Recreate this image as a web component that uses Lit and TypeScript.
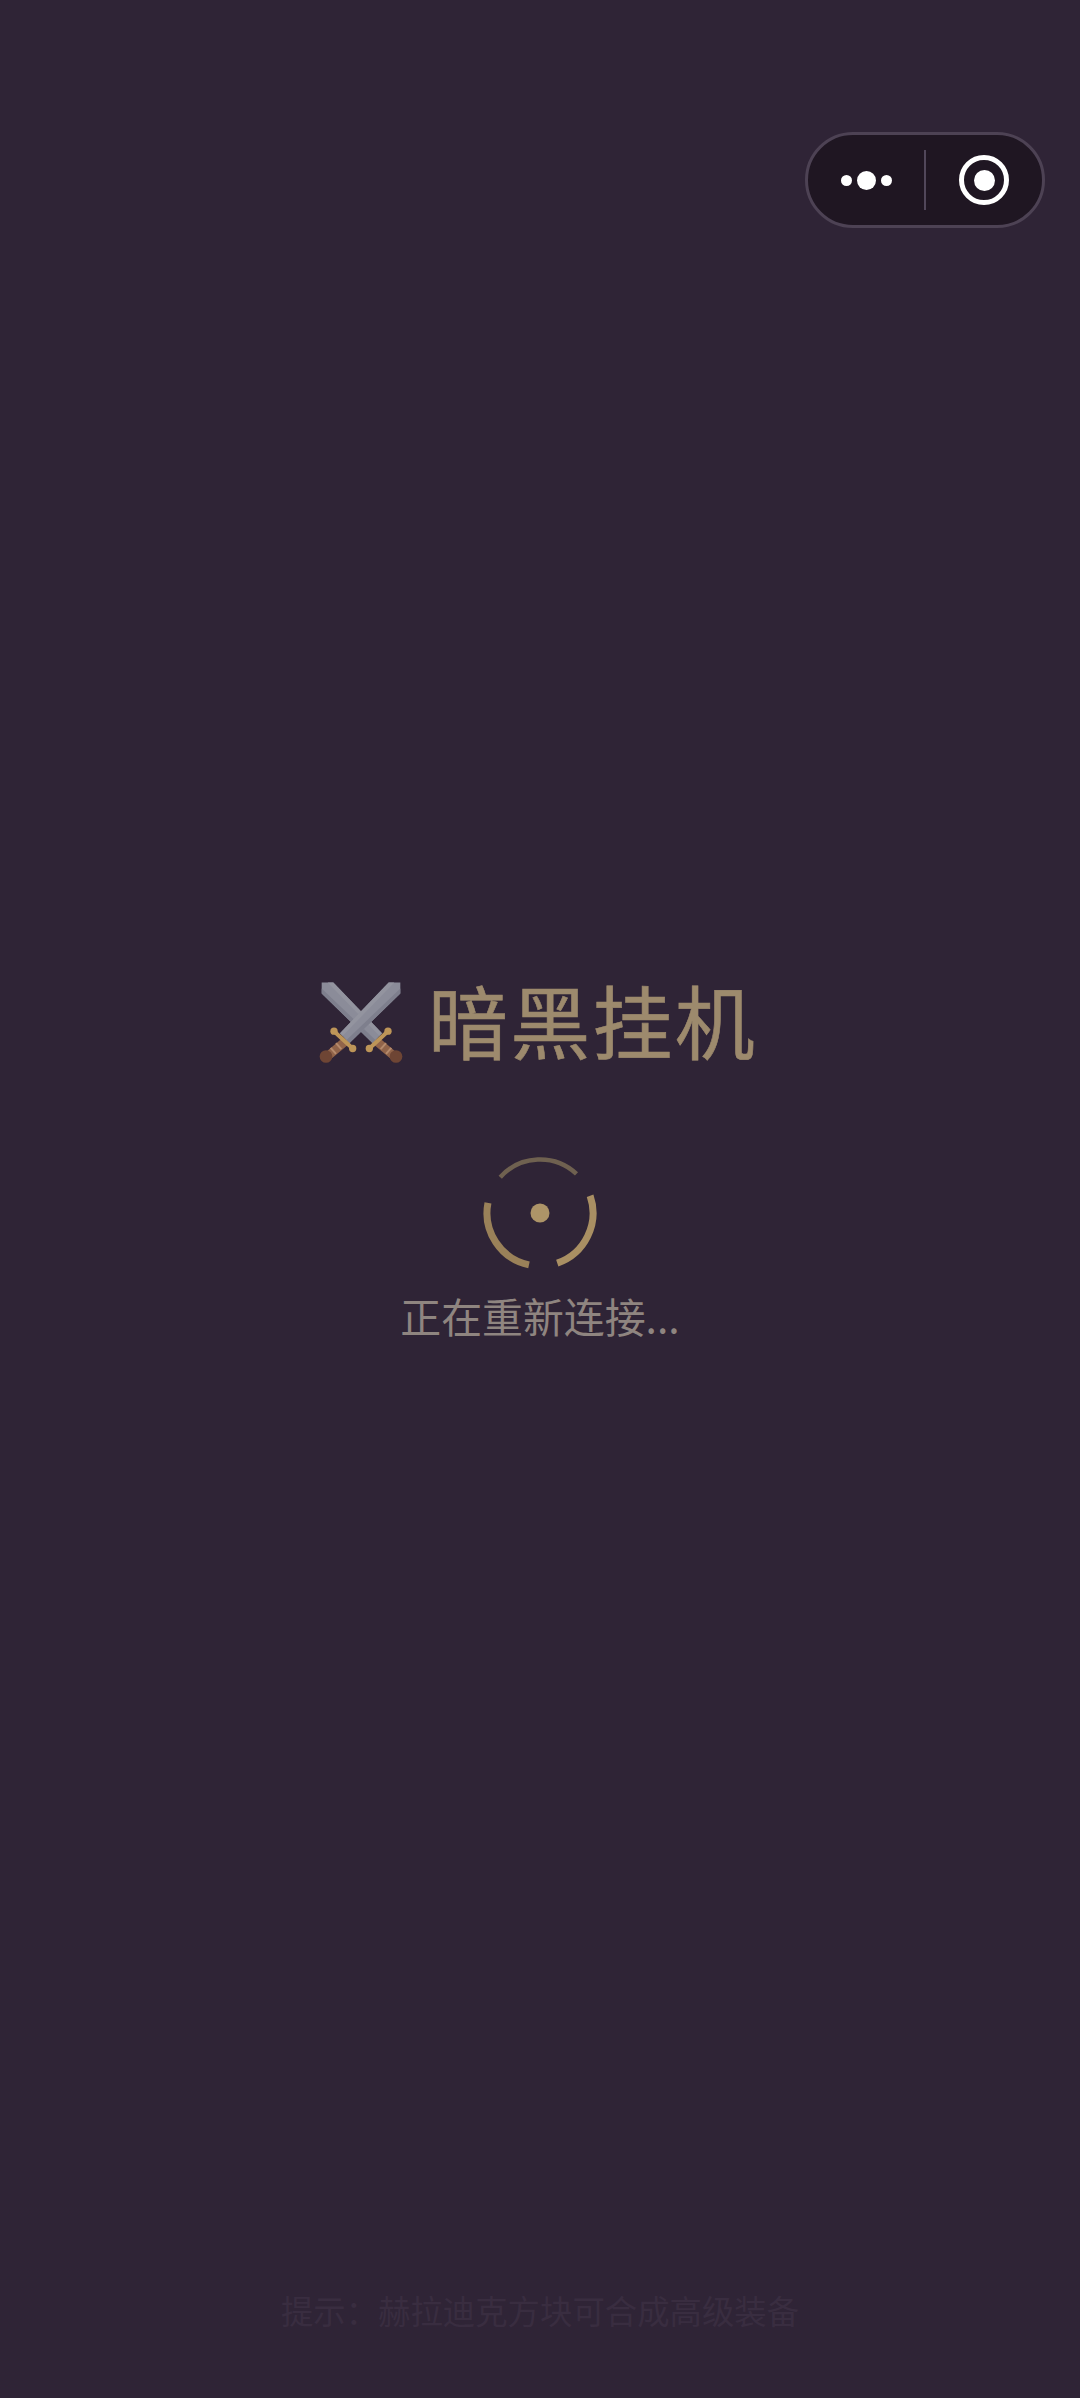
import { LitElement, html, css, svg } from 'lit';
import { customElement, property } from 'lit/decorators.js';

// polar helper for the spinner arcs, angles in degrees clockwise from 12 o'clock
const arc = (r: number, from: number, to: number) => {
  const pt = (a: number) => {
    const t = (a * Math.PI) / 180;
    return `${(60 + r * Math.sin(t)).toFixed(2)} ${(60 - r * Math.cos(t)).toFixed(2)}`;
  };
  return `M${pt(from)}A${r} ${r} 0 ${to - from > 180 ? 1 : 0} 1 ${pt(to)}`;
};

@customElement('menu-capsule')
export class MenuCapsule extends LitElement {
  static styles = css`
    :host {
      position: absolute;
      top: 132px;
      left: 805px;
      width: 240px;
      height: 96px;
      box-sizing: border-box;
      display: flex;
      align-items: center;
      background: #1f1622;
      border: 3px solid #4d4254;
      border-radius: 48px;
    }
    .more,
    .target {
      flex: 1;
      display: flex;
      justify-content: center;
      align-items: center;
    }
    .more {
      gap: 5px;
    }
    .dot {
      width: 11px;
      height: 11px;
      border-radius: 50%;
      background: #fff;
    }
    .dot.big {
      width: 19px;
      height: 19px;
    }
    .line {
      width: 2px;
      height: 60px;
      background: #51475a;
    }
    .ring {
      width: 50px;
      height: 50px;
      box-sizing: border-box;
      border: 5px solid #fff;
      border-radius: 50%;
      display: flex;
      justify-content: center;
      align-items: center;
    }
    .ring i {
      width: 21px;
      height: 21px;
      border-radius: 50%;
      background: #fff;
    }
  `;

  render() {
    return html`
      <div class="more">
        <span class="dot"></span><span class="dot big"></span><span class="dot"></span>
      </div>
      <div class="line"></div>
      <div class="target"><div class="ring"><i></i></div></div>
    `;
  }
}

@customElement('load-spinner')
export class LoadSpinner extends LitElement {
  static styles = css`
    :host {
      display: block;
      width: 120px;
      height: 120px;
    }
    svg {
      display: block;
    }
  `;

  render() {
    return html`
      <svg width="120" height="120" viewBox="0 0 120 120" fill="none">
        <path d=${arc(53.5, -48, 43)} stroke="#6f6150" stroke-width="4.5" />
        <path d=${arc(53, 71, 161)} stroke="#a98f63" stroke-width="7" />
        <path d=${arc(53, 192, 281)} stroke="#9a8159" stroke-width="7" />
        <circle cx="60" cy="60" r="9.5" fill="#ad9468" />
      </svg>
    `;
  }
}

@customElement('crossed-swords')
export class CrossedSwords extends LitElement {
  static styles = css`
    :host {
      display: block;
      width: 90px;
      height: 87px;
    }
    svg {
      display: block;
    }
  `;

  // one sword, tip at top right, handle at bottom left
  private sword() {
    return svg`
      <path d="M136 248L84 292" stroke="#91644a" stroke-width="26" />
      <path d="M110 252L126 270M94 266L110 284" stroke="#b58a6c" stroke-width="6" />
      <circle cx="80" cy="292" r="19" fill="#6e4534" />
      <path d="M268 70H303V103L150 252L122 222Z" fill="#8b8c99" />
      <path d="M268 70H285L130 230L122 222Z" fill="#93949f" />
      <path d="M303 88V103L150 252L141 243Z" fill="#7e7f8d" />
      <path d="M104 216L160 268" stroke="#bd9558" stroke-width="12" stroke-linecap="round" />
      <circle cx="104" cy="216" r="11" fill="#bd9558" />
      <circle cx="160" cy="268" r="11" fill="#bd9558" />
    `;
  }

  render() {
    return html`
      <svg width="90" height="87" viewBox="50 60 270 260">
        <g transform="matrix(-1 0 0 1 370 0)">${this.sword()}</g>
        ${this.sword()}
      </svg>
    `;
  }
}

@customElement('app-root')
export class AppRoot extends LitElement {
  @property() title = '暗黑挂机';
  @property() status = '正在重新连接...';
  @property() hint = '提示：赫拉迪克方块可合成高级装备';

  static styles = css`
    :host {
      display: flex;
      flex-direction: column;
      align-items: center;
      position: relative;
      height: 2398px;
      overflow: hidden;
      background: #2f2436;
      font-family: 'Noto Sans CJK SC', 'Noto Sans', sans-serif;
    }
    .brand {
      display: flex;
      align-items: center;
      gap: 22px;
      margin-top: 972px;
      height: 100px;
      padding-right: 7px;
    }
    .name {
      font-size: 80px;
      line-height: 100px;
      letter-spacing: 2.2px;
      color: #9d8a6d;
      -webkit-text-stroke: 0.6px #9d8a6d;
      margin-top: -9px;
    }
    load-spinner {
      margin-top: 81px;
    }
    .status {
      margin-top: 13px;
      font-size: 40.9px;
      line-height: 60px;
      color: #8f8580;
    }
    .hint {
      margin-top: auto;
      margin-bottom: 64px;
      font-size: 32.4px;
      line-height: 48px;
      color: #392d40;
    }
  `;

  render() {
    return html`
      <menu-capsule></menu-capsule>
      <div class="brand">
        <crossed-swords></crossed-swords>
        <div class="name">${this.title}</div>
      </div>
      <load-spinner></load-spinner>
      <div class="status">${this.status}</div>
      <div class="hint">${this.hint}</div>
    `;
  }
}
